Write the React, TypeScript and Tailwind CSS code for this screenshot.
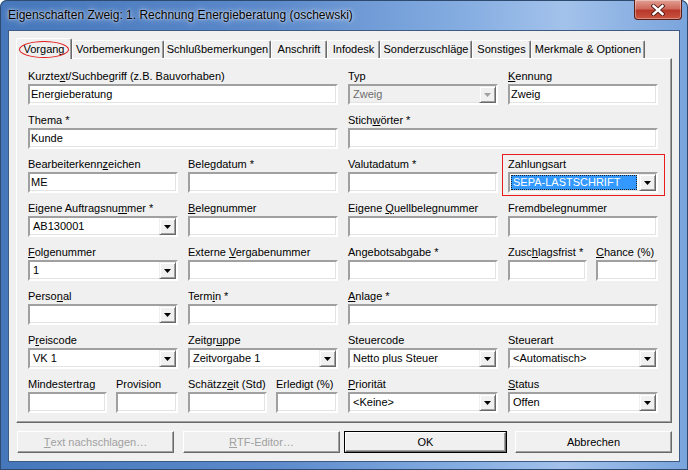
import React from "react";

type Kids = { children?: React.ReactNode };

function U({ children }: Kids) {
  return <span className="underline decoration-1 underline-offset-[1px]">{children}</span>;
}

const sunken =
  "h-[21px] border-2 border-t-[#a0a0a0] border-l-[#a0a0a0] border-b-white border-r-white shadow-[inset_-1px_-1px_0_#e3e3e3]";

function Field({ value }: { value?: string }) {
  return <div className={`${sunken} bg-white pl-[1px] leading-[17px] whitespace-nowrap`}>{value}</div>;
}

function Arrow({ disabled }: { disabled?: boolean }) {
  return (
    <div className="flex h-[17px] w-[17px] shrink-0 items-center justify-center border border-t-[#f0f0f0] border-l-[#f0f0f0] border-r-[#696969] border-b-[#696969] bg-[#f0f0f0] shadow-[inset_1px_1px_0_#fff,inset_-1px_-1px_0_#a0a0a0]">
      <svg width="7" height="4" viewBox="0 0 7 4">
        <polygon points="0,0 7,0 3.5,4" fill={disabled ? "#a0a0a0" : "#000"} />
      </svg>
    </div>
  );
}

function Combo({ value, disabled, selected }: { value?: string; disabled?: boolean; selected?: boolean }) {
  return (
    <div className={`${sunken} flex ${disabled ? "bg-[#f0f0f0]" : "bg-white"}`}>
      {selected ? (
        <div className="min-w-0 flex-1 p-[1px] pr-[2px]">
          <div className="h-full border border-dotted border-[#222] bg-[#3399ff] pl-[1px] leading-[13px] text-white whitespace-nowrap">
            {value}
          </div>
        </div>
      ) : (
        <div
          className={`min-w-0 flex-1 pl-[3px] leading-[17px] whitespace-nowrap ${disabled ? "text-[#6d6d6d]" : ""}`}
        >
          {value}
        </div>
      )}
      <Arrow disabled={disabled} />
    </div>
  );
}

function Cell({ label, children, className }: Kids & { label: React.ReactNode; className?: string }) {
  return (
    <div className={className}>
      <div className="h-[16px] leading-[16px] whitespace-nowrap">{label}</div>
      {children}
    </div>
  );
}

function Tab({ label, w }: { label: string; w: string }) {
  return (
    <div
      className={`${w} flex h-[18px] items-center justify-center rounded-t-[2px] border-t border-l border-r border-t-white border-l-white border-r-[#696969] shadow-[inset_-1px_0_0_#a0a0a0] whitespace-nowrap`}
    >
      {label}
    </div>
  );
}

function Button({ children, w, disabled, def }: Kids & { w: string; disabled?: boolean; def?: boolean }) {
  return (
    <div className={`${w} h-[22px] ${def ? "border border-black" : ""}`}>
      <div
        className={`flex h-full items-center justify-center border border-t-white border-l-white border-r-[#696969] border-b-[#696969] bg-[#f0f0f0] shadow-[inset_-1px_-1px_0_#a0a0a0] ${
          disabled ? "text-[#a0a0a0]" : "text-black"
        }`}
      >
        {children}
      </div>
    </div>
  );
}

export default function App() {
  return (
    <div className="relative flex h-[470px] w-[688px] flex-col overflow-hidden rounded-t-[7px] bg-[linear-gradient(90deg,#4677bb_0%,#5c8acb_40%,#86aee2_68%,#a3c2eb_82%,#79a4dc_100%)] font-['Liberation_Sans',Arial,sans-serif] text-[11px] text-black shadow-[inset_0_0_0_1px_#2e4a6e]">
      <div className="flex h-[30px] shrink-0">
        <div className="pl-[8px] pt-[7px] text-[12px] leading-[16px] [text-shadow:0_0_6px_rgba(255,255,255,0.9),0_0_2px_rgba(255,255,255,0.8)]">
          Eigenschaften Zweig: 1. Rechnung Energieberatung (oschewski)
        </div>
        <div className="ml-auto mr-[6px] flex h-[20px] w-[48px] items-center justify-center rounded-b-[4px] border border-t-0 border-[#5a1d18] bg-[linear-gradient(180deg,#e2a094_0%,#cf6a5c_45%,#b8382a_55%,#c9553f_100%)] shadow-[inset_0_0_0_1px_rgba(255,255,255,0.35)]">
          <svg width="14" height="12" viewBox="0 0 14 12">
            <path d="M2.5 2 L11.5 10 M11.5 2 L2.5 10" stroke="#4a1612" strokeWidth="4.2" strokeLinecap="square" />
            <path d="M2.5 2 L11.5 10 M11.5 2 L2.5 10" stroke="#fff" strokeWidth="2.4" strokeLinecap="square" />
          </svg>
        </div>
      </div>

      <div className="mx-[8px] mb-[8px] flex flex-1 flex-col border border-[#3d5b82] bg-[#f0f0f0] pl-[7px] pt-[7px]">
        <div className="flex h-[20px] items-end">
          <div className="relative z-10 -mb-[1px] flex h-[21px] w-[56px] items-center justify-center rounded-t-[2px] border-t border-l border-r border-t-white border-l-white border-r-[#696969] bg-[#f0f0f0] shadow-[inset_-1px_0_0_#a0a0a0]">
            Vorgang
            <div className="absolute bottom-[1px] left-[2px] right-[2px] top-[2px] rounded-[50%] border border-[#e31b1b]" />
          </div>
          <Tab label="Vorbemerkungen" w="w-[92px]" />
          <Tab label="Schlußbemerkungen" w="w-[107px]" />
          <Tab label="Anschrift" w="w-[56px]" />
          <Tab label="Infodesk" w="w-[53px]" />
          <Tab label="Sonderzuschläge" w="w-[92px]" />
          <Tab label="Sonstiges" w="w-[59px]" />
          <Tab label="Merkmale & Optionen" w="w-[114px]" />
        </div>

        <div className="h-[365px] w-[656px] border border-t-white border-l-white border-r-[#696969] border-b-[#696969] pl-[11px] pt-[9px] shadow-[inset_-1px_-1px_0_#a0a0a0]">
          <div className="grid w-[630px] grid-cols-4 gap-x-[10px] gap-y-[7px]">
            <Cell className="col-span-2" label={<>Kurzte<U>x</U>t/Suchbegriff (z.B. Bauvorhaben)</>}>
              <Field value="Energieberatung" />
            </Cell>
            <Cell label="Typ">
              <Combo value="Zweig" disabled />
            </Cell>
            <Cell label={<><U>K</U>ennung</>}>
              <Field value="Zweig" />
            </Cell>

            <Cell className="col-span-2" label="Thema *">
              <Field value="Kunde" />
            </Cell>
            <Cell className="col-span-2" label={<>Stich<U>w</U>örter *</>}>
              <Field />
            </Cell>

            <Cell label={<>Bearbeiterkenn<U>z</U>eichen</>}>
              <Field value="ME" />
            </Cell>
            <Cell label="Belegdatum *">
              <Field />
            </Cell>
            <Cell label="Valutadatum *">
              <Field />
            </Cell>
            <Cell className="relative" label="Zahlungsart">
              <Combo value="SEPA-LASTSCHRIFT" selected />
              <div className="absolute -bottom-[3px] -left-[6px] -right-[7px] -top-[2px] border border-[#e81c1c]" />
            </Cell>

            <Cell label={<>Eigene Auftragsnu<U>m</U>mer *</>}>
              <Combo value="AB130001" />
            </Cell>
            <Cell label={<><U>B</U>elegnummer</>}>
              <Field />
            </Cell>
            <Cell label={<>Eigene <U>Q</U>uellbelegnummer</>}>
              <Field />
            </Cell>
            <Cell label="Fremdbelegnummer">
              <Field />
            </Cell>

            <Cell label={<><U>F</U>olgenummer</>}>
              <Combo value="1" />
            </Cell>
            <Cell label={<>Externe <U>V</U>ergabenummer</>}>
              <Field />
            </Cell>
            <Cell label="Angebotsabgabe *">
              <Field />
            </Cell>
            <div className="flex gap-[9px]">
              <Cell className="w-[79px]" label={<>Zusc<U>h</U>lagsfrist *</>}>
                <Field />
              </Cell>
              <Cell className="flex-1" label={<><U>C</U>hance (%)</>}>
                <Field />
              </Cell>
            </div>

            <Cell label={<>Perso<U>n</U>al</>}>
              <Combo />
            </Cell>
            <Cell label={<>Term<U>i</U>n *</>}>
              <Field />
            </Cell>
            <Cell className="col-span-2" label={<><U>A</U>nlage *</>}>
              <Field />
            </Cell>

            <Cell label={<>P<U>r</U>eiscode</>}>
              <Combo value="VK 1" />
            </Cell>
            <Cell label={<>Zeitgr<U>u</U>ppe</>}>
              <Combo value="Zeitvorgabe 1" />
            </Cell>
            <Cell label="Steuercode">
              <Combo value="Netto plus Steuer" />
            </Cell>
            <Cell label="Steuerart">
              <Combo value="<Automatisch>" />
            </Cell>

            <div className="flex gap-[9px]">
              <Cell className="w-[79px]" label="Mindestertrag">
                <Field />
              </Cell>
              <Cell className="flex-1" label="Provision">
                <Field />
              </Cell>
            </div>
            <div className="flex gap-[9px]">
              <Cell className="w-[79px]" label={<>Schätzz<U>e</U>it (Std)</>}>
                <Field />
              </Cell>
              <Cell className="flex-1" label="Erledigt (%)">
                <Field />
              </Cell>
            </div>
            <Cell label={<><U>P</U>riorität</>}>
              <Combo value="<Keine>" />
            </Cell>
            <Cell label={<><U>S</U>tatus</>}>
              <Combo value="Offen" />
            </Cell>
          </div>
        </div>

        <div className="ml-[1px] mt-[8px] flex">
          <Button w="w-[157px]" disabled>
            <U>T</U>ext nachschlagen…
          </Button>
          <Button w="ml-[9px] w-[157px]" disabled>
            <U>R</U>TF-Editor…
          </Button>
          <Button w="ml-[4px] w-[163px]" def>
            OK
          </Button>
          <Button w="ml-[8px] w-[157px]">Abbrechen</Button>
        </div>
      </div>
    </div>
  );
}
